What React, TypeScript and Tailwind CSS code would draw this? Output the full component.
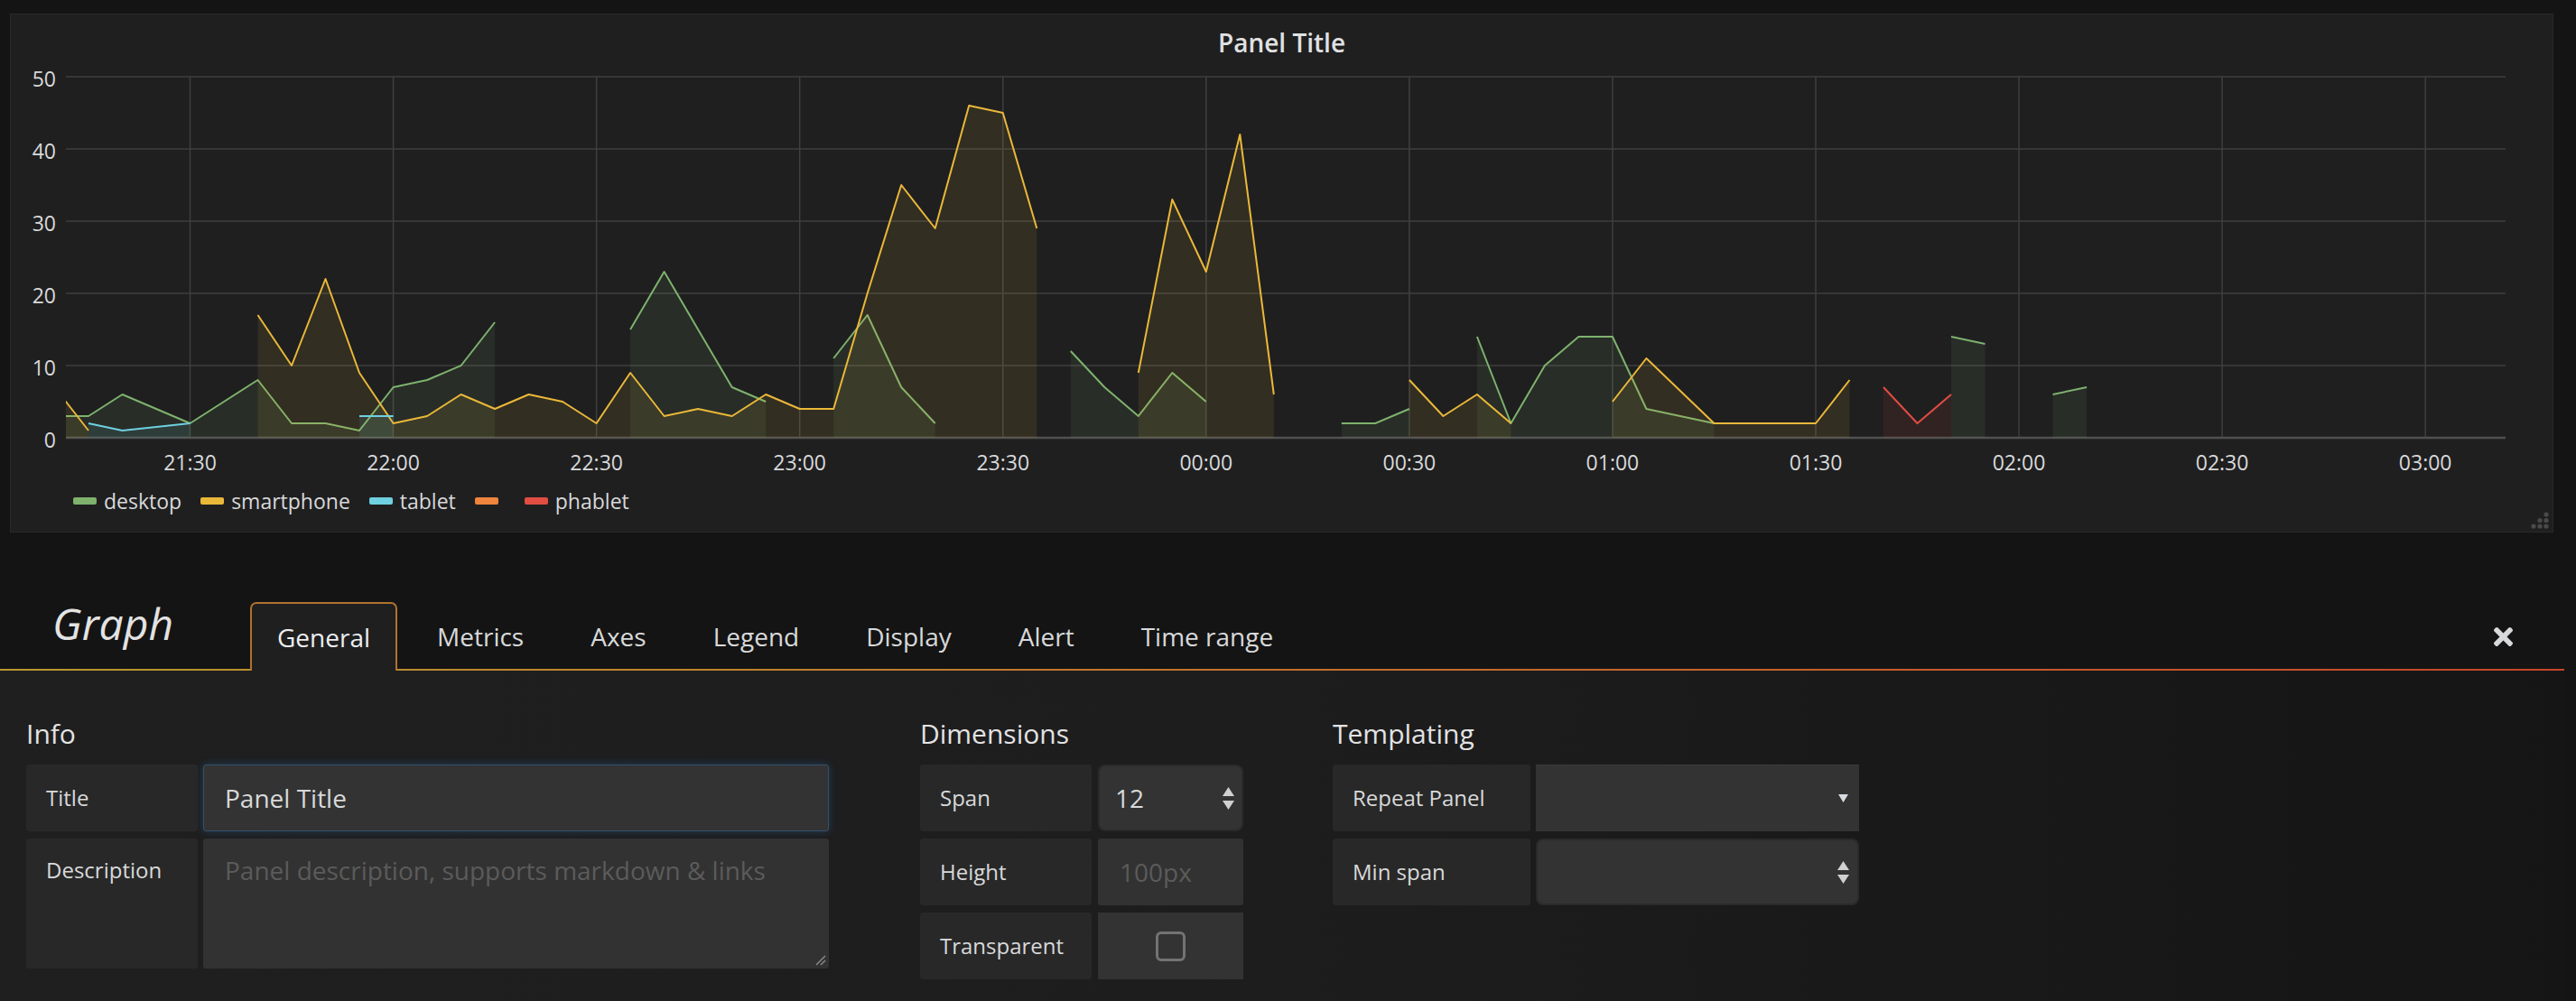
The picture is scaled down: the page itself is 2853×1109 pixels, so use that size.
import React from "react";

type Pt = [number, number];

interface Series {
	name: string;
	color: string;
	segs: Pt[][];
}

// one point every 5 minutes, k = 0 is 21:30
const STEP = 37.51;
const px = (k: number) => 210.5 + STEP * k;
const py = (v: number) => 485 - v * 8;

const SERIES: Series[] = [
	{
		name: "desktop",
		color: "#7eb26d",
		segs: [
			[[-4, 3], [-3, 3], [-2, 6], [-1, 4], [0, 2], [1, 5], [2, 8], [3, 2], [4, 2], [5, 1], [6, 7], [7, 8], [8, 10], [9, 16]],
			[[13, 15], [14, 23], [15, 15], [16, 7], [17, 5]],
			[[19, 11], [20, 17], [21, 7], [22, 2]],
			[[26, 12], [27, 7], [28, 3], [29, 9], [30, 5]],
			[[34, 2], [35, 2], [36, 4]],
			[[38, 14], [39, 2], [40, 10], [41, 14], [42, 14], [43, 4], [44, 3], [45, 2]],
			[[52, 14], [53, 13]],
			[[55, 6], [56, 7]],
		],
	},
	{
		name: "smartphone",
		color: "#eab839",
		segs: [
			[[-4, 7], [-3, 1]],
			[[2, 17], [3, 10], [4, 22], [5, 9], [6, 2], [7, 3], [8, 6], [9, 4], [10, 6], [11, 5], [12, 2], [13, 9], [14, 3], [15, 4], [16, 3], [17, 6], [18, 4], [19, 4], [20, 20], [21, 35], [22, 29], [23, 46], [24, 45], [25, 29]],
			[[28, 9], [29, 33], [30, 23], [31, 42], [32, 6]],
			[[36, 8], [37, 3], [38, 6], [39, 2]],
			[[42, 5], [43, 11], [44, 6.5], [45, 2], [46, 2], [47, 2], [48, 2], [49, 8]],
		],
	},
	{
		name: "tablet",
		color: "#6ed0e0",
		segs: [
			[[-3, 2], [-2, 1], [-1, 1.5], [0, 2]],
			[[5, 3], [6, 3]],
		],
	},
	{ name: "", color: "#ef843c", segs: [] },
	{ name: "phablet", color: "#e24d42", segs: [[[50, 7], [51, 2], [52, 6]]] },
];

const TIMES = ["21:30", "22:00", "22:30", "23:00", "23:30", "00:00", "00:30", "01:00", "01:30", "02:00", "02:30", "03:00"];
const TICKS = [0, 10, 20, 30, 40, 50];

const linePath = (seg: Pt[]) => seg.map(([k, v], i) => `${i ? "L" : "M"}${px(k).toFixed(1)} ${py(v).toFixed(1)}`).join(" ");

const fillPath = (seg: Pt[]) => {
	const first = px(seg[0][0]).toFixed(1);
	const last = px(seg[seg.length - 1][0]).toFixed(1);
	return `M${first} 485 ` + seg.map(([k, v]) => `L${px(k).toFixed(1)} ${py(v).toFixed(1)}`).join(" ") + ` L${last} 485 Z`;
};

const Chart = () => {
	const font = "'Open Sans', sans-serif";
	return (
		<svg width={2815} height={461} viewBox="12 69 2815 461" className="block">
			<defs>
				<clipPath id="plot">
					<rect x={73} y={80} width={2702} height={406} />
				</clipPath>
			</defs>
			{TICKS.map((t) => (
				<g key={t}>
					<line x1={73} x2={2775} y1={py(t)} y2={py(t)} stroke={t === 0 ? "#505050" : "#3f3f3f"} strokeWidth={t === 0 ? 2.5 : 1.5} />
					<text x={62} y={py(t) + 2} textAnchor="end" dominantBaseline="central" fontSize={23} fill="#d8d9da" fontFamily={font}>
						{t}
					</text>
				</g>
			))}
			{TIMES.map((label, i) => (
				<g key={label}>
					<line x1={px(i * 6)} x2={px(i * 6)} y1={85} y2={484} stroke="#3f3f3f" strokeWidth={1.5} />
					<text x={px(i * 6)} y={512} textAnchor="middle" dominantBaseline="central" fontSize={23} fill="#d8d9da" fontFamily={font}>
						{label}
					</text>
				</g>
			))}
			<g clipPath="url(#plot)">
				{SERIES.map((s) =>
					s.segs.map((seg, i) => (
						<g key={s.color + i}>
							<path d={fillPath(seg)} fill={s.color} fillOpacity={0.1} />
							<path d={linePath(seg)} fill="none" stroke={s.color} strokeWidth={2} strokeLinejoin="round" />
						</g>
					))
				)}
			</g>
		</svg>
	);
};

const Panel = () => (
	<div className="relative ml-[11px] mt-[15px] flex h-[575px] w-[2817px] flex-col border border-[#292929] bg-[#1f1f20]">
		<div className="flex h-[53px] items-center justify-center pt-[9px] text-[28px] font-semibold text-[#e0e1e2]">Panel Title</div>
		<Chart />
		<div className="mt-[7px] flex h-[36px] items-center pl-[69px] text-[23px] text-[#d8d9da]">
			{SERIES.map((s) => (
				<div key={s.color} className="mr-[21px] flex items-center">
					<span className="mr-[8px] h-[8px] w-[26px] rounded-[2px]" style={{ backgroundColor: s.color }} />
					<span>{s.name}</span>
				</div>
			))}
		</div>
		<svg width={22} height={20} viewBox="0 0 22 20" className="absolute bottom-[2px] right-[3px]">
			{[
				[18, 16], [11, 16], [4, 16], [18, 9.5], [11, 9.5], [18, 3],
			].map(([cx, cy]) => (
				<circle key={`${cx}-${cy}`} cx={cx} cy={cy} r={2.6} fill="#4a4a4a" />
			))}
		</svg>
	</div>
);

const TABS = ["General", "Metrics", "Axes", "Legend", "Display", "Alert", "Time range"];

const Header = () => (
	<div className="flex h-[151px] w-[2853px] items-end">
		<div className="mb-[26px] flex h-[48px] w-[277px] shrink-0 items-center pl-[58px] text-[48px] italic leading-none text-[#e3e3e3]">
			Graph
		</div>
		<div className="flex gap-[14px]">
			{TABS.map((tab, i) =>
				i === 0 ? (
					<div
						key={tab}
						className="relative z-10 mb-[-2px] flex h-[76px] items-center rounded-t-[7px] border-2 border-b-0 border-[#b0722f] bg-[#1f1f20] px-[28px] text-[28px] text-[#eceef0]"
					>
						{tab}
					</div>
				) : (
					<div key={tab} className="mb-[-2px] flex h-[76px] items-center px-[30px] text-[28px] text-[#d8d9da]">
						{tab}
					</div>
				)
			)}
		</div>
		<div className="mb-[-2px] ml-auto mr-[70px] flex h-[76px] items-center">
			<svg width={21} height={21} viewBox="0 80 352 352" fill="#d8d9da">
				<path d="M242.72 256l100.07-100.07c12.28-12.28 12.28-32.19 0-44.48l-22.24-22.24c-12.28-12.28-32.19-12.28-44.48 0L176 189.28 75.930 89.21c-12.28-12.28-32.19-12.28-44.48 0L9.21 111.45c-12.28 12.28-12.28 32.19 0 44.48L109.28 256 9.21 356.07c-12.28 12.28-12.28 32.19 0 44.48l22.24 22.24c12.28 12.28 32.2 12.28 44.48 0L176 322.72l100.07 100.07c12.28 12.28 32.2 12.28 44.48 0l22.24-22.24c12.28-12.28 12.28-32.19 0-44.48L242.72 256z" />
			</svg>
		</div>
	</div>
);

const Spinner = () => (
	<svg width={13} height={25} viewBox="0 0 13 25" fill="#cfd0d1">
		<polygon points="0,10 6.5,0 13,10" />
		<polygon points="0,15 13,15 6.5,25" />
	</svg>
);

const Label = ({ children, w }: { children: React.ReactNode; w: string }) => (
	<div className={`${w} flex h-full shrink-0 items-center rounded-[3px] bg-[#282828] pl-[22px] text-[24px] text-[#d8d9da]`}>{children}</div>
);

const Heading = ({ children }: { children: React.ReactNode }) => (
	<h3 className="mb-[16px] h-[36px] text-[30px] leading-[36px] text-[#e3e3e3]">{children}</h3>
);

const Body = () => (
	<div className="flex h-[366px] w-[2840px] bg-gradient-to-r from-[#1f1f20] via-[#1d1d1e] to-[#151515] pl-[29px] pt-[52px]">
		{/* Info */}
		<div className="w-[889px]">
			<Heading>Info</Heading>
			<div className="flex h-[74px] gap-[6px]">
				<Label w="w-[190px]">Title</Label>
				<div className="flex flex-1 items-center rounded-[3px] border border-[#34506b] bg-[#333333] pl-[23px] text-[28px] text-[#d8d9da] shadow-[0_0_8px_rgba(51,140,210,0.3)]">
					Panel Title
				</div>
			</div>
			<div className="mt-[8px] flex h-[144px] gap-[6px]">
				<div className="flex h-full w-[190px] shrink-0 items-start rounded-[3px] bg-[#282828] pl-[22px] pt-[20px] text-[24px] leading-[30px] text-[#d8d9da]">
					Description
				</div>
				<div className="relative flex-1 rounded-[3px] bg-[#323232] pl-[24px] pt-[18px] text-[28px] leading-[34px] text-[#5b5b5b]">
					Panel description, supports markdown &amp; links
					<svg width={12} height={12} viewBox="0 0 12 12" className="absolute bottom-[3px] right-[3px]" stroke="#8a8a8a" strokeWidth={1.5}>
						<line x1={11} y1={1} x2={1} y2={11} />
						<line x1={11} y1={6} x2={6} y2={11} />
					</svg>
				</div>
			</div>
		</div>

		{/* Dimensions */}
		<div className="ml-[101px] w-[358px]">
			<Heading>Dimensions</Heading>
			<div className="flex h-[74px] gap-[7px]">
				<Label w="w-[190px]">Span</Label>
				<div className="flex flex-1 items-center justify-between rounded-[8px] border-2 border-[#2a2a2a] bg-[#333333] pl-[17px] pr-[8px] text-[28px] text-[#d8d9da]">
					<span>12</span>
					<Spinner />
				</div>
			</div>
			<div className="mt-[8px] flex h-[74px] gap-[7px]">
				<Label w="w-[190px]">Height</Label>
				<div className="flex flex-1 items-center rounded-[3px] bg-[#323232] pl-[24px] text-[28px] text-[#5b5b5b]">100px</div>
			</div>
			<div className="mt-[8px] flex h-[74px] gap-[7px]">
				<Label w="w-[190px]">Transparent</Label>
				<div className="flex flex-1 items-center justify-center bg-[#333333]">
					<div className="h-[33px] w-[33px] rounded-[6px] border-[3px] border-[#737373]" />
				</div>
			</div>
		</div>

		{/* Templating */}
		<div className="ml-[99px] w-[583px]">
			<Heading>Templating</Heading>
			<div className="flex h-[74px] gap-[6px]">
				<Label w="w-[219px]">Repeat Panel</Label>
				<div className="flex flex-1 items-center justify-end border-t border-[#3a3a3a] bg-[#333333] pr-[12px]">
					<svg width={11} height={9} viewBox="0 0 11 9" fill="#d8dce2">
						<polygon points="0,0 11,0 5.5,9" />
					</svg>
				</div>
			</div>
			<div className="mt-[8px] flex h-[74px] gap-[6px]">
				<Label w="w-[219px]">Min span</Label>
				<div className="flex flex-1 items-center justify-end rounded-[8px] border-2 border-[#2a2a2a] bg-[#333333] pr-[9px]">
					<Spinner />
				</div>
			</div>
		</div>
	</div>
);

export default function App() {
	return (
		<div className="h-[1109px] w-[2853px] overflow-hidden bg-[#141414] font-['Open_Sans',sans-serif] text-[#d8d9da]">
			<Panel />
			<Header />
			<div className="h-[2px] w-[2840px] bg-gradient-to-r from-[#b8972e] via-[#c2702c] to-[#c4452a]" />
			<Body />
		</div>
	);
}
